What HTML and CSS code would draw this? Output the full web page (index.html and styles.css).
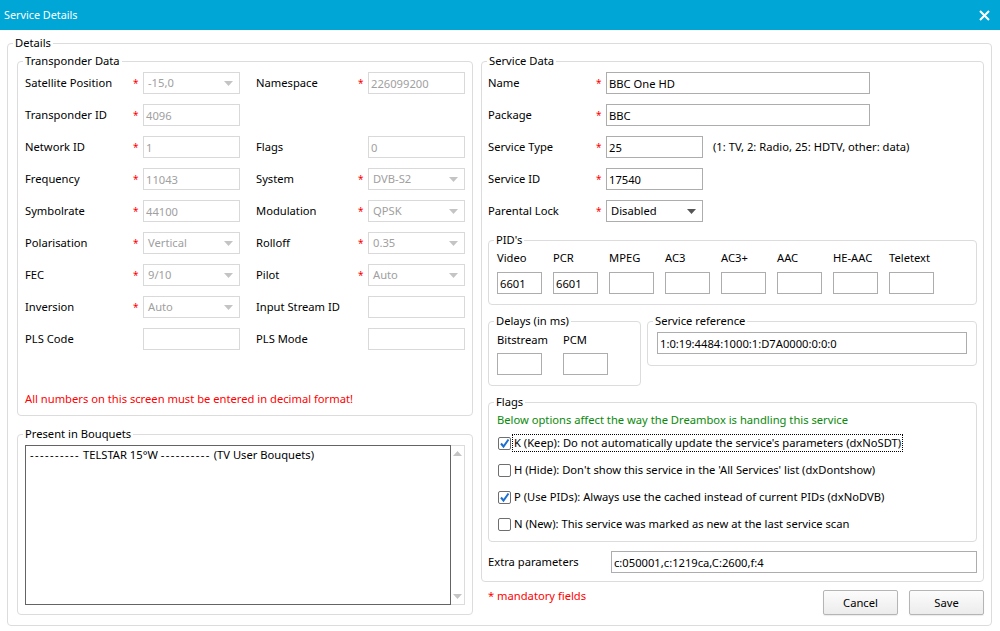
FILE: index.html
```html
<!DOCTYPE html>
<html lang="en">

<head>
    <meta charset="UTF-8">
    <meta name="viewport" content="width=device-width, initial-scale=1.0">
    <title>Service Details</title>
    <link rel="stylesheet" href="styles.css">
</head>

<body>

    <div class="titlebar">
        <span class="title">Service Details</span>
        <svg class="close" width="11" height="11" viewBox="0 0 11 11">
            <path d="M1 1L10 10M10 1L1 10" stroke="#fff" stroke-width="2" fill="none" />
        </svg>
    </div>

    <fieldset class="group details">
        <legend>Details</legend>
        <div class="columns">

            <!-- left side -->
            <div class="col-left">
                <fieldset class="group">
                    <legend>Transponder Data</legend>
                    <div class="group-body transponder">
                        <div class="tp-grid">
                            <label>Satellite Position</label><span class="req">*</span>
                            <div class="combo off"><span>-15,0</span><svg class="arrow" width="9" height="5" viewBox="0 0 9 5"><path d="M0 0H9L4.5 5Z" /></svg></div>
                            <label class="l2">Namespace</label><span class="req">*</span>
                            <input class="field" value="226099200" disabled>

                            <label>Transponder ID</label><span class="req">*</span>
                            <input class="field" value="4096" disabled>
                            <span></span><span></span><span></span>

                            <label>Network ID</label><span class="req">*</span>
                            <input class="field" value="1" disabled>
                            <label class="l2">Flags</label><span></span>
                            <input class="field" value="0" disabled>

                            <label>Frequency</label><span class="req">*</span>
                            <input class="field" value="11043" disabled>
                            <label class="l2">System</label><span class="req">*</span>
                            <div class="combo off"><span>DVB-S2</span><svg class="arrow" width="9" height="5" viewBox="0 0 9 5"><path d="M0 0H9L4.5 5Z" /></svg></div>

                            <label>Symbolrate</label><span class="req">*</span>
                            <input class="field" value="44100" disabled>
                            <label class="l2">Modulation</label><span class="req">*</span>
                            <div class="combo off"><span>QPSK</span><svg class="arrow" width="9" height="5" viewBox="0 0 9 5"><path d="M0 0H9L4.5 5Z" /></svg></div>

                            <label>Polarisation</label><span class="req">*</span>
                            <div class="combo off"><span>Vertical</span><svg class="arrow" width="9" height="5" viewBox="0 0 9 5"><path d="M0 0H9L4.5 5Z" /></svg></div>
                            <label class="l2">Rolloff</label><span class="req">*</span>
                            <div class="combo off"><span>0.35</span><svg class="arrow" width="9" height="5" viewBox="0 0 9 5"><path d="M0 0H9L4.5 5Z" /></svg></div>

                            <label>FEC</label><span class="req">*</span>
                            <div class="combo off"><span>9/10</span><svg class="arrow" width="9" height="5" viewBox="0 0 9 5"><path d="M0 0H9L4.5 5Z" /></svg></div>
                            <label class="l2">Pilot</label><span class="req">*</span>
                            <div class="combo off"><span>Auto</span><svg class="arrow" width="9" height="5" viewBox="0 0 9 5"><path d="M0 0H9L4.5 5Z" /></svg></div>

                            <label>Inversion</label><span class="req">*</span>
                            <div class="combo off"><span>Auto</span><svg class="arrow" width="9" height="5" viewBox="0 0 9 5"><path d="M0 0H9L4.5 5Z" /></svg></div>
                            <label class="l2">Input Stream ID</label><span></span>
                            <input class="field" value="" disabled>

                            <label>PLS Code</label><span></span>
                            <input class="field" value="" disabled>
                            <label class="l2">PLS Mode</label><span></span>
                            <input class="field" value="" disabled>
                        </div>
                        <p class="note">All numbers on this screen must be entered in decimal format!</p>
                    </div>
                </fieldset>

                <fieldset class="group bouquets">
                    <legend>Present in Bouquets</legend>
                    <div class="group-body bouquets-body">
                        <div class="listbox">
                            <div class="list">
                                <div class="list-item"><span class="dash">----------</span> TELSTAR 15°W <span class="dash">----------</span> (TV User Bouquets)</div>
                            </div>
                            <div class="scroll">
                                <svg class="sarrow" width="9" height="5" viewBox="0 0 9 5"><path d="M0 5H9L4.5 0Z" /></svg>
                                <svg class="sarrow" width="9" height="5" viewBox="0 0 9 5"><path d="M0 0H9L4.5 5Z" /></svg>
                            </div>
                        </div>
                    </div>
                </fieldset>
            </div>

            <!-- right side -->
            <div class="col-right">
                <fieldset class="group">
                    <legend>Service Data</legend>
                    <div class="group-body service">
                        <div class="sd-grid">
                            <label>Name</label><span class="req">*</span>
                            <input class="field on wide" value="BBC One HD">

                            <label>Package</label><span class="req">*</span>
                            <input class="field on wide" value="BBC">

                            <label>Service Type</label><span class="req">*</span>
                            <div class="with-hint">
                                <input class="field on" value="25">
                                <span class="hint">(1: TV, 2: Radio, 25: HDTV, other: data)</span>
                            </div>

                            <label>Service ID</label><span class="req">*</span>
                            <input class="field on" value="17540">

                            <label>Parental Lock</label><span class="req">*</span>
                            <div class="combo on"><span>Disabled</span><svg class="arrow" width="9" height="5" viewBox="0 0 9 5"><path d="M0 0H9L4.5 5Z" /></svg></div>
                        </div>

                        <fieldset class="group pids">
                            <legend>PID's</legend>
                            <div class="group-body pids-body">
                                <div class="pid-grid">
                                    <span>Video</span><span>PCR</span><span>MPEG</span><span>AC3</span>
                                    <span>AC3+</span><span>AAC</span><span>HE-AAC</span><span>Teletext</span>
                                    <input class="field on" value="6601">
                                    <input class="field on" value="6601">
                                    <input class="field on" value="">
                                    <input class="field on" value="">
                                    <input class="field on" value="">
                                    <input class="field on" value="">
                                    <input class="field on" value="">
                                    <input class="field on" value="">
                                </div>
                            </div>
                        </fieldset>

                        <div class="pair">
                            <fieldset class="group delays">
                                <legend>Delays (in ms)</legend>
                                <div class="group-body delays-body">
                                    <div class="delay-grid">
                                        <span>Bitstream</span><span>PCM</span>
                                        <input class="field on" value="">
                                        <input class="field on" value="">
                                    </div>
                                </div>
                            </fieldset>
                            <fieldset class="group sref">
                                <legend>Service reference</legend>
                                <div class="group-body sref-body">
                                    <input class="field on full" value="1:0:19:4484:1000:1:D7A0000:0:0:0">
                                </div>
                            </fieldset>
                        </div>

                        <fieldset class="group flags">
                            <legend>Flags</legend>
                            <div class="group-body flags-body">
                                <p class="info">Below options affect the way the Dreambox is handling this service</p>
                                <ul class="checks">
                                    <li>
                                        <span class="check"><svg width="11" height="11" viewBox="0 0 11 11"><path d="M2 5.5L4.5 8.5L9.5 1.5" /></svg></span>
                                        <span class="focus">K (Keep): Do not automatically update the service's parameters (dxNoSDT)</span>
                                    </li>
                                    <li>
                                        <span class="check"></span>
                                        <span>H (Hide): Don't show this service in the 'All Services' list (dxDontshow)</span>
                                    </li>
                                    <li>
                                        <span class="check"><svg width="11" height="11" viewBox="0 0 11 11"><path d="M2 5.5L4.5 8.5L9.5 1.5" /></svg></span>
                                        <span>P (Use PIDs): Always use the cached instead of current PIDs (dxNoDVB)</span>
                                    </li>
                                    <li>
                                        <span class="check"></span>
                                        <span>N (New): This service was marked as new at the last service scan</span>
                                    </li>
                                </ul>
                            </div>
                        </fieldset>

                        <div class="extra">
                            <label>Extra parameters</label>
                            <input class="field on full" value="c:050001,c:1219ca,C:2600,f:4">
                        </div>
                    </div>
                </fieldset>

                <div class="footer">
                    <span class="mandatory">* mandatory fields</span>
                    <div class="buttons">
                        <button type="button">Cancel</button>
                        <button type="button">Save</button>
                    </div>
                </div>
            </div>

        </div>
    </fieldset>

</body>

</html>
```

FILE: styles.css
```css
body {
    margin: 0;
    background-color: #fff;
    color: #000;
    font-family: "Noto Sans", "Open Sans", sans-serif;
    font-size: 11.2px;
    line-height: 16px;
}

/* window title */
.titlebar {
    height: 30px;
    background-color: #00a6d6;
    color: #fff;
    display: flex;
    align-items: center;
    justify-content: space-between;
    padding: 0 10px 0 4px;
}

.title {
    font-size: 10.8px;
}

/* group boxes */
.group {
    border: 1px solid #dcdcdc;
    border-radius: 4px;
    margin: 0;
    padding: 0;
    min-width: 0;
}

.group > legend {
    margin-left: 5px;
    padding: 0 2px;
    line-height: 16px;
}

.details {
    margin: 5px 8px 0 7px;
}

.columns {
    display: flex;
    gap: 8px;
    padding: 2px 7px 10px 9px;
}

.col-left {
    width: 456px;
    display: flex;
    flex-direction: column;
}

.col-right {
    flex: 1;
    display: flex;
    flex-direction: column;
}

/* inputs */
.field {
    box-sizing: border-box;
    width: 97px;
    height: 22px;
    margin: 0;
    padding: 0 2px;
    border: 1px solid #d9d9d9;
    background: #fff;
    font: inherit;
    color: #a0a0a0;
    outline: none;
}

.field:disabled {
    color: #a0a0a0;
    background: #fff;
}

.field.on {
    border-color: #adadad;
    color: #000;
}

.field.wide {
    width: 264px;
}

.field.full {
    width: 100%;
}

.combo {
    box-sizing: border-box;
    width: 97px;
    height: 22px;
    border: 1px solid #d9d9d9;
    display: flex;
    align-items: center;
    justify-content: space-between;
    padding: 0 6px 0 4px;
    color: #a0a0a0;
    fill: #c4c4c4;
}

.combo.on {
    border-color: #adadad;
    color: #000;
    fill: #555;
}

.req {
    color: #f00;
    font-size: 10px;
    margin-left: -2px;
}

/* transponder */
.transponder {
    padding: 3px 6px 8px 7px;
}

.tp-grid {
    display: grid;
    grid-template-columns: 110px 8px 97px 120px 8px 97px;
    grid-auto-rows: 22px;
    row-gap: 10px;
    align-items: center;
}

.tp-grid .l2 {
    padding-left: 16px;
}

.note {
    margin: 41px 0 0;
    color: #f00;
}

/* bouquets */
.bouquets {
    margin-top: 10px;
}

.bouquets-body {
    padding: 3px 7px 9px 7px;
}

.listbox {
    display: flex;
    height: 160px;
}

.list {
    flex: 1;
    border: 1px solid #646464;
    padding: 1px 4px;
}

.dash {
    letter-spacing: 1.4px;
}

.scroll {
    width: 13px;
    border: 1px solid #dcdcdc;
    border-left: none;
    display: flex;
    flex-direction: column;
    justify-content: space-between;
    align-items: center;
    padding: 5px 0;
    fill: #c4c4c4;
}

/* service data */
.service {
    padding: 3px 6px 8px 6px;
}

.sd-grid {
    display: grid;
    grid-template-columns: 110px 8px 1fr;
    grid-auto-rows: 22px;
    row-gap: 10px;
    align-items: center;
}

.with-hint {
    display: flex;
    align-items: center;
    gap: 10px;
}

.pids {
    margin-top: 10px;
}

.pids-body {
    padding: 2px 8px 10px 8px;
}

.pid-grid {
    display: grid;
    grid-template-columns: repeat(8, 45px);
    column-gap: 11px;
    row-gap: 6px;
}

.pid-grid .field,
.delay-grid .field {
    width: 45px;
}

.pair {
    display: flex;
    align-items: flex-start;
    gap: 6px;
    margin-top: 8px;
}

.delays {
    width: 153px;
    box-sizing: border-box;
}

.delays-body {
    padding: 3px 8px 10px 8px;
}

.delay-grid {
    display: grid;
    grid-template-columns: 45px 45px;
    column-gap: 21px;
    row-gap: 5px;
}

.sref {
    flex: 1;
}

.sref-body {
    padding: 3px 9px 11px 9px;
}

/* flags */
.flags {
    margin-top: 8px;
}

.flags-body {
    padding: 2px 8px 9px 8px;
}

.info {
    margin: 0;
    color: #0a8a0a;
}

.checks {
    list-style: none;
    margin: 7px 0 0;
    padding: 0;
    display: flex;
    flex-direction: column;
    gap: 11px;
}

.checks li {
    display: flex;
    align-items: center;
    height: 16px;
}

.check {
    box-sizing: border-box;
    width: 13px;
    height: 13px;
    margin: 0 2px 0 1px;
    border: 1px solid #6e6e6e;
    border-radius: 2px;
    background: #fff;
    display: flex;
    align-items: center;
    justify-content: center;
}

.check path {
    fill: none;
    stroke: #1c6fcf;
    stroke-width: 2;
}

.checks li > span:last-child {
    padding: 0 1px;
}

.focus {
    outline: 1px dotted #000;
}

.extra {
    display: flex;
    align-items: center;
    margin-top: 9px;
}

.extra label {
    width: 123px;
    flex: none;
}

/* footer */
.footer {
    display: flex;
    justify-content: space-between;
    margin-top: 6px;
    padding-left: 7px;
}

.mandatory {
    color: #f00;
}

.buttons {
    display: flex;
    gap: 11px;
    margin-top: 2px;
}

button {
    width: 75px;
    height: 25px;
    font: inherit;
    color: #000;
    border: 1px solid #b5b5b5;
    border-radius: 2px;
    background: linear-gradient(#fcfcfc, #ececec);
    box-shadow: 0 1px 1px rgba(0, 0, 0, 0.08);
    padding: 0;
}
```
